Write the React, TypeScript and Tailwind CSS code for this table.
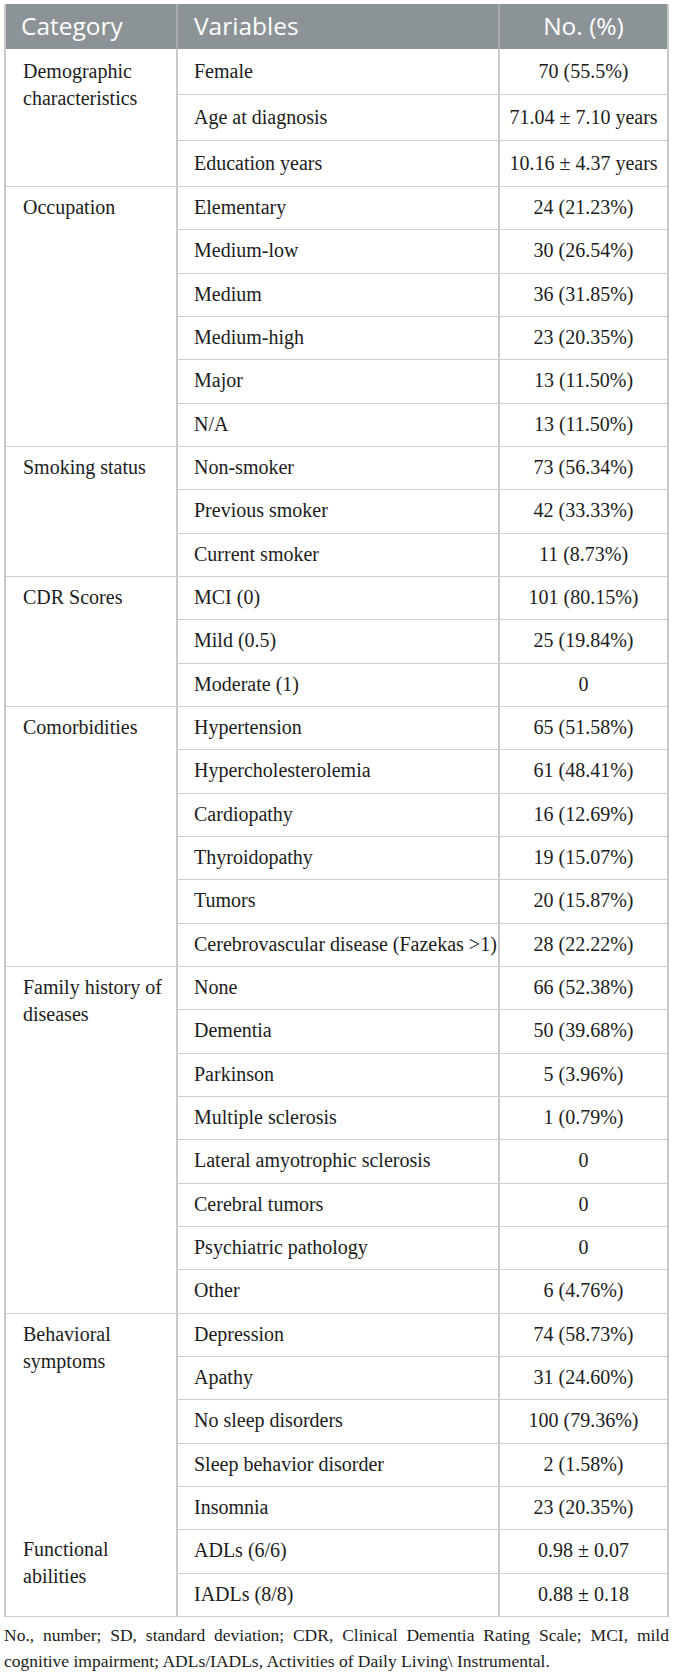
const groups: { cat: string[]; h: number; rows: [string, string][]; sub?: string[] }[] = [
  {
    cat: ["Demographic", "characteristics"],
    h: 46,
    rows: [
      ["Female", "70 (55.5%)"],
      ["Age at diagnosis", "71.04 ± 7.10 years"],
      ["Education years", "10.16 ± 4.37 years"],
    ],
  },
  {
    cat: ["Occupation"],
    h: 43.33,
    rows: [
      ["Elementary", "24 (21.23%)"],
      ["Medium-low", "30 (26.54%)"],
      ["Medium", "36 (31.85%)"],
      ["Medium-high", "23 (20.35%)"],
      ["Major", "13 (11.50%)"],
      ["N/A", "13 (11.50%)"],
    ],
  },
  {
    cat: ["Smoking status"],
    h: 43.33,
    rows: [
      ["Non-smoker", "73 (56.34%)"],
      ["Previous smoker", "42 (33.33%)"],
      ["Current smoker", "11 (8.73%)"],
    ],
  },
  {
    cat: ["CDR Scores"],
    h: 43.33,
    rows: [
      ["MCI (0)", "101 (80.15%)"],
      ["Mild (0.5)", "25 (19.84%)"],
      ["Moderate (1)", "0"],
    ],
  },
  {
    cat: ["Comorbidities"],
    h: 43.33,
    rows: [
      ["Hypertension", "65 (51.58%)"],
      ["Hypercholesterolemia", "61 (48.41%)"],
      ["Cardiopathy", "16 (12.69%)"],
      ["Thyroidopathy", "19 (15.07%)"],
      ["Tumors", "20 (15.87%)"],
      ["Cerebrovascular disease (Fazekas >1)", "28 (22.22%)"],
    ],
  },
  {
    cat: ["Family history of", "diseases"],
    h: 43.33,
    rows: [
      ["None", "66 (52.38%)"],
      ["Dementia", "50 (39.68%)"],
      ["Parkinson", "5 (3.96%)"],
      ["Multiple sclerosis", "1 (0.79%)"],
      ["Lateral amyotrophic sclerosis", "0"],
      ["Cerebral tumors", "0"],
      ["Psychiatric pathology", "0"],
      ["Other", "6 (4.76%)"],
    ],
  },
  {
    cat: ["Behavioral", "symptoms"],
    sub: ["Functional", "abilities"],
    h: 43.33,
    rows: [
      ["Depression", "74 (58.73%)"],
      ["Apathy", "31 (24.60%)"],
      ["No sleep disorders", "100 (79.36%)"],
      ["Sleep behavior disorder", "2 (1.58%)"],
      ["Insomnia", "23 (20.35%)"],
      ["ADLs (6/6)", "0.98 ± 0.07"],
      ["IADLs (8/8)", "0.88 ± 0.18"],
    ],
  },
];

function CatText({ lines, h }: { lines: string[]; h: number }) {
  return (
    <div className="pl-[17px] pr-2" style={{ paddingTop: (h - 27) / 2 - 1 }}>
      {lines.map((l) => (
        <div key={l} className="leading-[27px]">
          {l}
        </div>
      ))}
    </div>
  );
}

export default function App() {
  return (
    <div className="w-[675px] bg-white pt-[4px] pl-[4px] font-['Liberation_Serif',serif] text-[20px] text-[#1c1c1c]">
      <div className="w-[665px] border-l-2 border-r-2 border-[#c9c9c9]">
        {/* Header */}
        <div className="flex h-[45px] bg-[#8b9396] font-['Open_Sans',sans-serif] text-[24.5px] text-white">
          <div className="flex w-[172px] items-center border-r-2 border-[#a7adb0] pl-[15px]">Category</div>
          <div className="flex w-[322px] items-center border-r-2 border-[#a7adb0] pl-[16px]">Variables</div>
          <div className="flex flex-1 items-center justify-center">No. (%)</div>
        </div>

        {groups.map((g) => {
          const main = g.sub ? g.rows.slice(0, 5) : g.rows;
          return (
            <div key={g.cat[0]} className="flex border-b border-[#cfcfcf]">
              <div className="flex w-[172px] flex-col border-r-2 border-[#c9c9c9]">
                <div style={{ height: main.length * g.h - 1 }}>
                  <CatText lines={g.cat} h={g.h} />
                </div>
                {g.sub && (
                  <div className="flex-1">
                    <CatText lines={g.sub} h={g.h} />
                  </div>
                )}
              </div>
              <div className="flex flex-1 flex-col">
                {g.rows.map(([v, n], i) => (
                  <div
                    key={v}
                    className={`flex items-center ${i < g.rows.length - 1 ? "border-b border-[#cfcfcf]" : ""}`}
                    style={{ height: i < g.rows.length - 1 ? g.h : g.h - 1 }}
                  >
                    <div className="flex h-full w-[322px] items-center border-r-2 border-[#c9c9c9] pl-[16px] pb-[2px]">{v}</div>
                    <div className="flex-1 pb-[2px] text-center">{n}</div>
                  </div>
                ))}
              </div>
            </div>
          );
        })}
      </div>

      <p className="mt-[5px] w-[665px] text-justify text-[17.5px] leading-[26px] [text-align-last:left]">
        No., number; SD, standard deviation; CDR, Clinical Dementia Rating Scale; MCI, mild cognitive impairment;
        ADLs/IADLs, Activities of Daily Living\ Instrumental.
      </p>
    </div>
  );
}
